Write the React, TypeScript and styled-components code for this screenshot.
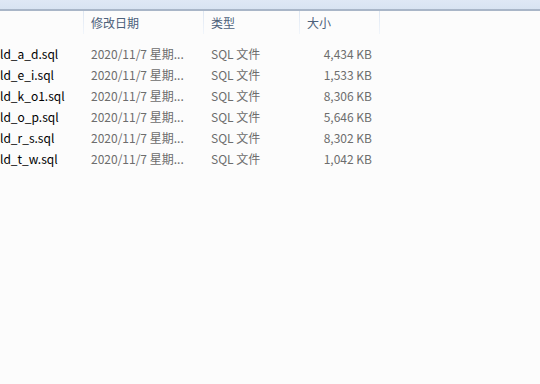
import styled, { createGlobalStyle } from "styled-components";

const GlobalStyle = createGlobalStyle`
  html, body {
    margin: 0;
    padding: 0;
    background: #fcfcfc;
  }
  body {
    font-family: "Noto Sans CJK SC", "Noto Sans", sans-serif;
    font-size: 12px;
  }
`;

type FileRow = {
  name: string;
  date: string;
  type: string;
  size: string;
};

const files: FileRow[] = [
  { name: "ld_a_d.sql", date: "2020/11/7 星期...", type: "SQL 文件", size: "4,434 KB" },
  { name: "ld_e_i.sql", date: "2020/11/7 星期...", type: "SQL 文件", size: "1,533 KB" },
  { name: "ld_k_o1.sql", date: "2020/11/7 星期...", type: "SQL 文件", size: "8,306 KB" },
  { name: "ld_o_p.sql", date: "2020/11/7 星期...", type: "SQL 文件", size: "5,646 KB" },
  { name: "ld_r_s.sql", date: "2020/11/7 星期...", type: "SQL 文件", size: "8,302 KB" },
  { name: "ld_t_w.sql", date: "2020/11/7 星期...", type: "SQL 文件", size: "1,042 KB" },
];

const Window = styled.div`
  width: 540px;
  height: 384px;
  background: #fcfcfc;
  overflow: hidden;
`;

const TopStrip = styled.div`
  height: 9px;
  background: linear-gradient(#dfe8f5, #d8e3f2);
  border-bottom: 2px solid #a9b6c8;
`;

const Header = styled.div`
  display: grid;
  grid-template-columns: 84px 120px 96px 80px;
  height: 23px;
`;

const HeaderCell = styled.div`
  display: flex;
  align-items: center;
  padding-left: 7px;
  color: #4c607a;
  border-right: 1px solid;
  border-image: linear-gradient(#dde6f2, #f2f6fb) 1;
`;

const List = styled.div`
  padding-top: 9px;
`;

const Row = styled.div`
  display: grid;
  grid-template-columns: 84px 120px 96px 72px;
  height: 21px;
  align-items: center;
`;

const Name = styled.div`
  color: #000;
  white-space: nowrap;
`;

const Cell = styled.div<{ $right?: boolean }>`
  color: #6d6d6d;
  padding-left: 7px;
  white-space: nowrap;
  text-align: ${(p) => (p.$right ? "right" : "left")};
`;

export default function App() {
  return (
    <Window>
      <GlobalStyle />
      <TopStrip />
      <Header>
        <HeaderCell />
        <HeaderCell>修改日期</HeaderCell>
        <HeaderCell>类型</HeaderCell>
        <HeaderCell>大小</HeaderCell>
      </Header>
      <List>
        {files.map((f) => (
          <Row key={f.name}>
            <Name>{f.name}</Name>
            <Cell>{f.date}</Cell>
            <Cell>{f.type}</Cell>
            <Cell $right>{f.size}</Cell>
          </Row>
        ))}
      </List>
    </Window>
  );
}
